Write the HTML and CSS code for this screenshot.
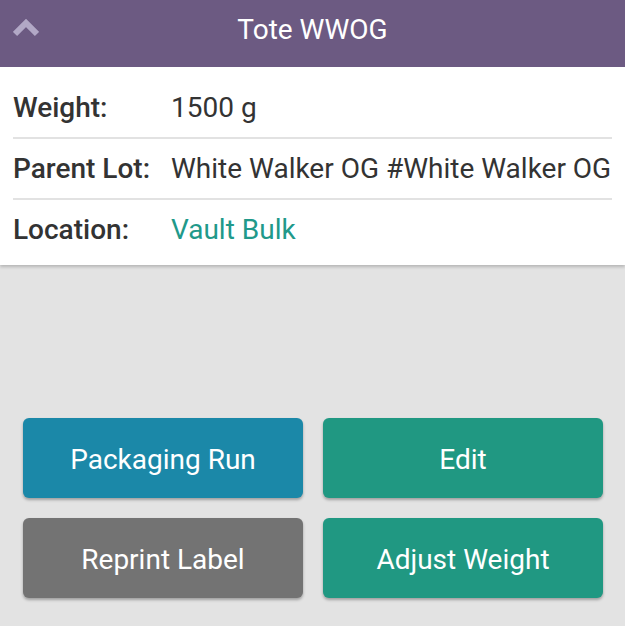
FILE: index.html
```html
<!DOCTYPE html>
<html>
<head>
<meta charset="utf-8">
<link rel="stylesheet" href="styles.css">
</head>
<body>
<div class="page">
  <header class="topbar">
    <svg class="chev" width="26" height="18" viewBox="0 0 26 18"><path d="M2 15 L13 4 L24 15" fill="none" stroke="#b2a8c6" stroke-width="6"/></svg>
    <h1 class="title">Tote WWOG</h1>
  </header>
  <section class="card">
    <div class="row"><span class="label">Weight:</span><span class="value">1500 g</span></div>
    <div class="row"><span class="label">Parent Lot:</span><span class="value">White Walker OG #White Walker OG</span></div>
    <div class="row"><span class="label">Location:</span><span class="value link">Vault Bulk</span></div>
  </section>
  <section class="actions">
    <button class="btn blue">Packaging Run</button>
    <button class="btn teal">Edit</button>
    <button class="btn gray">Reprint Label</button>
    <button class="btn teal">Adjust Weight</button>
  </section>
</div>
</body>
</html>
```
FILE: styles.css
```css
html, body { margin: 0; padding: 0; }
body { background: #e3e3e3; font-family: Roboto, "Noto Sans", sans-serif; }
.page { height: 626px; display: flex; flex-direction: column; }
.topbar { height: 67px; box-sizing: border-box; padding-bottom: 8px; background: #6c5a82; display: flex; align-items: center; justify-content: center; position: relative; }
.chev { position: absolute; left: 13px; top: 19px; }
.title { margin: 0; color: #fff; font-weight: 400; font-size: 28px; }
.card { background: #fff; padding: 11px 13px 6px; box-shadow: 0 2px 3px rgba(0,0,0,0.2); }
.row { height: 59px; display: flex; align-items: center; border-bottom: 2px solid #e2e2e2; font-size: 28px; color: #333; }
.row:last-child { border-bottom: none; }
.label { width: 158px; font-weight: 500; }
.value { font-weight: 400; white-space: nowrap; }
.link { color: #21998a; }
.actions { margin-top: auto; margin-bottom: 28px; display: grid; grid-template-columns: 280px 280px; gap: 20px; padding-left: 23px; }
.btn { height: 80px; padding-top: 3px; border: none; border-radius: 6px; color: #fff; font-family: Roboto, sans-serif; font-size: 28px; box-shadow: 0 2px 3px rgba(0,0,0,0.3); }
.blue { background: #1b88a8; }
.teal { background: #209882; }
.gray { background: #737373; }
```
